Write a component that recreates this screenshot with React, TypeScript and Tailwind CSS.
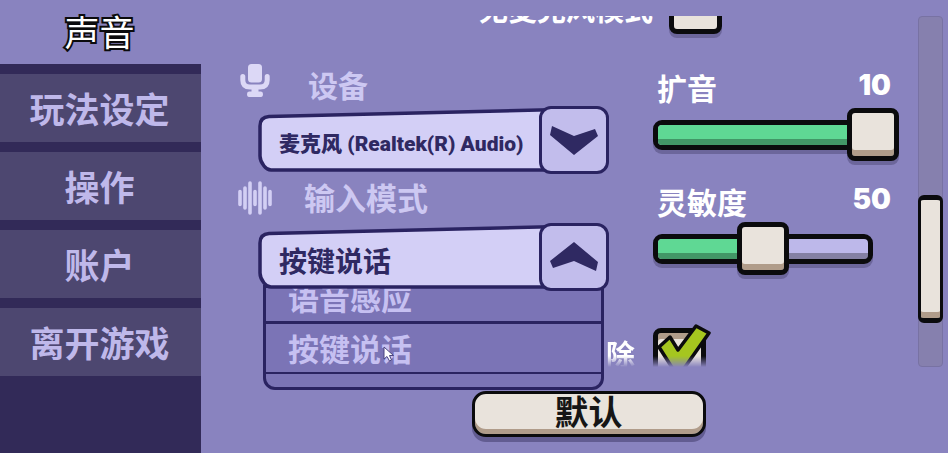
import React from 'react'
import clsx from 'clsx'

const TABS = ['玩法设定', '操作', '账户', '离开游戏']
const MODES = ['语音感应', '按键说话']

interface SelectFieldProps {
  id: string
  value: string
  options: string[]
  open?: boolean
  className?: string
  onChange: (value: string) => void
  children?: React.ReactNode
}

function SelectField({
  id,
  value,
  options,
  open,
  className,
  onChange,
  children,
}: SelectFieldProps) {
  return (
    <div className="relative z-10 ml-5 h-[68px]">
      {children}
      {/* the plate is taller on its right side */}
      <svg
        className="absolute inset-0 h-full w-full"
        viewBox="0 0 350 68"
        preserveAspectRatio="none"
        aria-hidden="true"
      >
        <path
          d="M11 10.500 L300 3.500 V64 H13 Q9 64 6 60 Q2 55 2 50 V20 Q2 11 11 10.500Z"
          fill="#d3cff6"
          stroke="#2a2361"
          strokeWidth="3.500"
        />
      </svg>
      <select
        id={id}
        value={value}
        onChange={(e) => onChange(e.target.value)}
        className={clsx(
          'relative h-full w-full appearance-none bg-transparent pl-[21px] pr-20 text-[#2f2962] outline-none',
          className
        )}
      >
        {options.map((option) => (
          <option key={option}>{option}</option>
        ))}
      </select>
      <span className="pointer-events-none absolute inset-y-0 right-0 flex w-[70px] items-center justify-center rounded-xl border-3 border-[#2a2361] bg-[#c2bdec]">
        <svg
          className={clsx('h-8 w-12', open && 'rotate-180')}
          viewBox="0 0 48 32"
          aria-hidden="true"
        >
          <path d="M2 2 L24 12 L45 5 L48 12 L24 31 L0 11Z" fill="#2f2962" />
        </svg>
      </span>
    </div>
  )
}

interface SliderProps {
  id: string
  label: string
  value: number
  max: number
  onChange: (value: number) => void
}

function Slider({ id, label, value, max, onChange }: SliderProps) {
  return (
    <div>
      <div className="flex h-11 items-center justify-between pl-1 pr-2 text-[30px] font-bold leading-8 text-white">
        <label htmlFor={id} className="pt-1">
          {label}
        </label>
        <output htmlFor={id} className="pb-0.5 font-[Inter] text-[28px] font-black">
          {value}
        </output>
      </div>
      <div className="relative flex h-[53px] items-center pr-[26px]">
        <div className="h-[30px] w-full overflow-hidden rounded-[9px] border-[5px] border-[#0b0b0d] bg-[#bdb8ea] shadow-[0_4px_0_#6c669b]">
          <div className="relative h-full">
            <div
              className="h-full bg-[#5fd894]"
              style={{ width: `${(value / max) * 100}%` }}
            />
            <div className="absolute inset-x-0 bottom-0 h-1.5 bg-black/30" />
          </div>
        </div>
        <input
          id={id}
          type="range"
          min={0}
          max={max}
          value={value}
          onChange={(e) => onChange(Number(e.target.value))}
          className="absolute inset-y-0 -left-[26px] right-0 appearance-none bg-transparent outline-none [&::-webkit-slider-thumb]:h-[53px] [&::-webkit-slider-thumb]:w-[52px] [&::-webkit-slider-thumb]:appearance-none [&::-webkit-slider-thumb]:rounded-lg [&::-webkit-slider-thumb]:border-[5px] [&::-webkit-slider-thumb]:border-[#0b0b0d] [&::-webkit-slider-thumb]:bg-[#e9e3dc] [&::-webkit-slider-thumb]:shadow-[inset_0_-6px_0_#b09c8a,0_4px_0_#6c669b]"
        />
      </div>
    </div>
  )
}

function MicIcon() {
  return (
    <svg className="ml-0.5 h-[34px] w-[30px]" viewBox="0 0 30 34" aria-hidden="true">
      <rect x="8" y="0" width="14" height="18.500" rx="3.500" fill="#dcd8f6" />
      <path
        d="M2.800 12.500 V16 Q2.800 23 10 23 H20 Q27.200 23 27.200 16 V12.500"
        fill="none"
        stroke="#dcd8f6"
        strokeWidth="5"
        strokeLinecap="round"
      />
      <path
        d="M11.500 23 H18.500 V27.500 H21 Q23 27.500 23 30 Q23 33 21 33 H9 Q7 33 7 30 Q7 27.500 9 27.500 H11.500Z"
        fill="#dcd8f6"
      />
    </svg>
  )
}

function WaveIcon() {
  return (
    <svg className="h-[34px] w-[34px]" viewBox="0 0 34 34" aria-hidden="true">
      <path
        d="M2 10.500 V23.500 M7 7 V27 M12 2 V32 M17 10.500 V23.500 M22 2 V32 M27 7 V27 M32 10.500 V23.500"
        stroke="#d3cff4"
        strokeWidth="3.600"
        strokeLinecap="round"
      />
    </svg>
  )
}

export default function App() {
  const [device, setDevice] = React.useState('麦克风 (Realtek(R) Audio)')
  const [mode, setMode] = React.useState('按键说话')
  const [boost, setBoost] = React.useState(10)
  const [sensitivity, setSensitivity] = React.useState(50)

  return (
    <div className="flex min-h-screen bg-[#8983bf] font-['Lato','Noto_Sans_CJK_SC',sans-serif]">
      <nav className="flex w-[201px] shrink-0 flex-col text-[35px] font-bold">
        <button className="h-16 pr-0.5 font-normal text-white [-webkit-text-stroke:4px_#0b0b0d] [paint-order:stroke_fill]">
          声音
        </button>
        <div className="flex flex-1 flex-col gap-2.5 bg-[#322a58] pt-2.5">
          {TABS.map((tab) => (
            <button
              key={tab}
              className="h-[68px] bg-[#4d4770] pr-0.5 pt-0.5 text-[#bfb8ea]"
            >
              {tab}
            </button>
          ))}
        </div>
      </nav>

      <main className="flex flex-1 flex-col pl-[37px] pt-4">
        <div className="flex gap-[19px] pr-[5px]">
          <div className="flex-1">
            <div className="flex h-[22px] items-end justify-end gap-4 overflow-hidden pr-[177px]">
              <label
                htmlFor="no-mic"
                className="pb-3 text-[29px] font-bold leading-8 text-white"
              >
                无麦克风模式
              </label>
              <input
                id="no-mic"
                type="checkbox"
                className="mb-1 h-[52px] w-[53px] appearance-none rounded-lg border-[5px] border-[#0b0b0d] bg-[#e9e3dc] shadow-[0_4px_0_#6c669b]"
              />
            </div>

            <div className="mt-[26px] flex gap-11">
              <div className="flex-1 text-[31px] font-bold text-[#cdc8f2]">
                <div className="flex h-[42px] items-start gap-[38px]">
                  <MicIcon />
                  <label htmlFor="device" className="pt-0.5 text-[30px] leading-[38px]">
                    设备
                  </label>
                </div>
                <SelectField
                  id="device"
                  value={device}
                  options={['麦克风 (Realtek(R) Audio)']}
                  onChange={setDevice}
                  className="pt-2.5 font-['Roboto','Noto_Sans_CJK_SC',sans-serif] text-[21px] font-black"
                />
                <div className="flex h-[49px] items-center gap-8 pb-0.5">
                  <WaveIcon />
                  <label htmlFor="mode" className="leading-[38px]">
                    输入模式
                  </label>
                </div>
                <SelectField
                  id="mode"
                  value={mode}
                  options={MODES}
                  open
                  onChange={setMode}
                  className="pt-2 text-[28px] font-bold"
                >
                  <div className="absolute left-[5px] right-[5px] top-[62px] h-[105px] rounded-b-xl border-3 border-[#2a2361] bg-[#7b74b6]">
                    {MODES.map((option, i) => (
                      <button
                        key={option}
                        onClick={() => setMode(option)}
                        className={clsx(
                          'flex w-full items-end overflow-hidden border-[#2a2361] pl-[22px] leading-[46px] text-[#c6c0f1]',
                          i === 0 ? 'h-9 border-b-3' : 'h-[50px] border-b-2'
                        )}
                      >
                        {option}
                      </button>
                    ))}
                    <svg
                      className="absolute left-[117px] top-[58px] h-4 w-3"
                      viewBox="0 0 12 16"
                      aria-hidden="true"
                    >
                      <path
                        d="M1 1 V13 L4 10.500 L6.500 15 L8.500 14 L6.500 9.500 H10.500Z"
                        fill="#fff"
                        stroke="#4b4580"
                        strokeWidth="1"
                      />
                    </svg>
                  </div>
                </SelectField>
              </div>

              <div className="flex w-[246px] flex-col gap-[17px]">
                <Slider id="boost" label="扩音" value={boost} max={10} onChange={setBoost} />
                <Slider
                  id="sensitivity"
                  label="灵敏度"
                  value={sensitivity}
                  max={100}
                  onChange={setSensitivity}
                />
              </div>
            </div>

            <div className="mt-8 flex h-11 items-start justify-end gap-[18px] overflow-hidden pr-[188px] [mask-image:linear-gradient(#000_75%,transparent)]">
              <label
                htmlFor="cancel"
                className="pt-4 text-[29px] font-bold leading-8 text-white"
              >
                除
              </label>
              <span className="relative h-[60px] w-[58px] shrink-0">
                <input
                  id="cancel"
                  type="checkbox"
                  defaultChecked
                  className="mt-[5px] block h-[52px] w-[53px] appearance-none rounded-lg border-[5px] border-[#0b0b0d] bg-[#e9e3dc] shadow-[inset_0_6px_0_#b09c8a]"
                />
                <svg
                  className="pointer-events-none absolute left-0 top-0 h-[60px] w-[58px]"
                  viewBox="0 0 58 60"
                  aria-hidden="true"
                >
                  <path
                    d="M6 24 L17 14 L25 27 L43 3 L56 10 L25 54Z"
                    fill="#a5c61f"
                    stroke="#0b0b0d"
                    strokeWidth="3.500"
                    strokeLinejoin="round"
                  />
                </svg>
              </span>
            </div>
          </div>

          <div className="w-[25px] rounded-sm border border-[#7872a3] bg-[#8680ae]">
            <div className="-mx-px mt-[178px] h-32 rounded-md border-x-3 border-y-[5px] border-[#0b0b0d] bg-[#e9e3dc] shadow-[inset_0_-6px_0_#b09c8a]" />
          </div>
        </div>

        <div className="relative z-20 flex justify-center pb-3 pr-[9px] pt-6">
          <button className="h-[46px] w-[234px] rounded-[14px] border-3 border-[#0b0b0d] bg-[#e9e3dc] pb-1 text-[34px] font-bold leading-9 text-[#161616] shadow-[inset_0_-5px_0_#b09c8a,0_5px_0_#625c91]">
            默认
          </button>
        </div>
      </main>
    </div>
  )
}
